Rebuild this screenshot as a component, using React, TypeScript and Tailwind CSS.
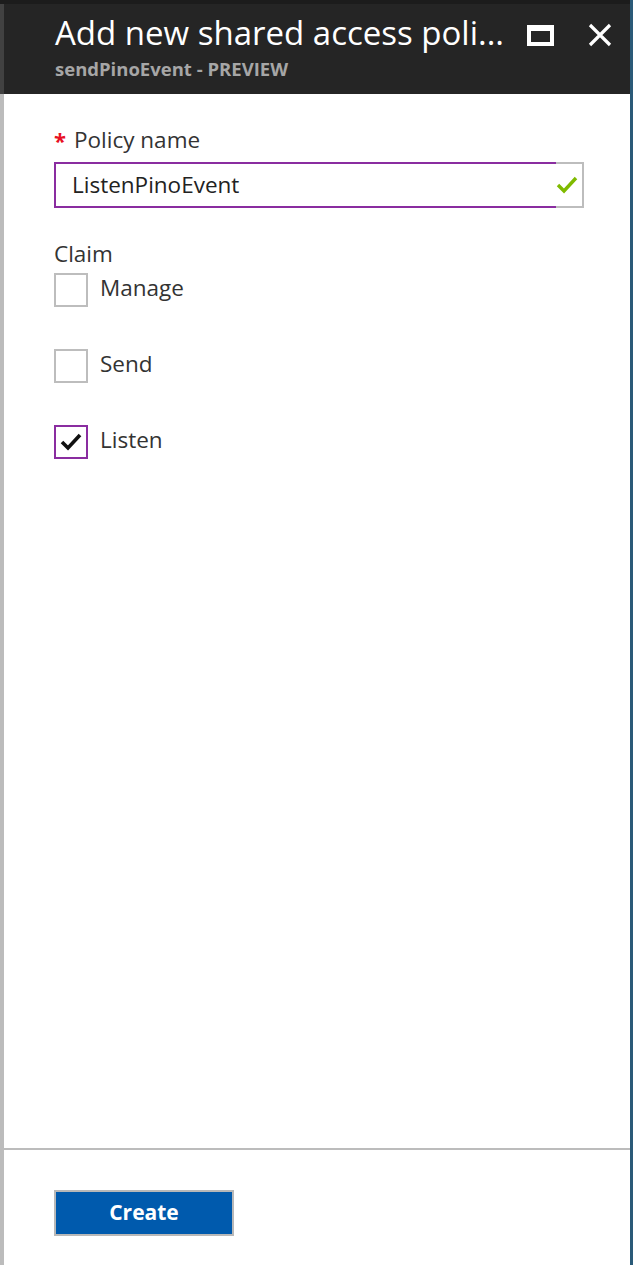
import { useState } from 'react';

const font = { fontFamily: '"Open Sans", "Noto Sans", sans-serif' };

interface ClaimProps {
    label: string;
    checked: boolean;
    onToggle: () => void;
}

function ClaimRow({ label, checked, onToggle }: ClaimProps) {
    return (
        <button type="button" onClick={onToggle} className="flex items-start gap-[12px] h-[76px] text-left">
            <span
                className={`flex items-center justify-center w-[34px] h-[34px] border-2 bg-white ${
                    checked ? 'border-[#8a2da0]' : 'border-[#bdbdbd]'
                }`}
            >
                {checked && (
                    <svg width="24" height="22" viewBox="0 0 24 22">
                        <path d="M3 11 L9 17 L21 4" fill="none" stroke="#111" strokeWidth="3.6" />
                    </svg>
                )}
            </span>
            <span className="text-[22.5px] leading-[30px] text-[#333]">{label}</span>
        </button>
    );
}

export default function App() {
    const [name, setName] = useState('ListenPinoEvent');
    const [claims, setClaims] = useState({ Manage: false, Send: false, Listen: true });

    const toggle = (key: keyof typeof claims) => setClaims((c) => ({ ...c, [key]: !c[key] }));

    return (
        <div className="flex w-[633px] h-[1265px] bg-white overflow-hidden" style={font}>
            <div className="flex-1 flex flex-col">
                <div className="h-[4px] bg-[#1c1c1c]" />

                {/* blade header */}
                <div className="h-[90px] bg-[#252525] border-l-4 border-[#414141] flex items-start pl-[51px] pr-[18px] pt-[7px]">
                    <div className="flex-1 min-w-0">
                        <h1 className="text-[33px] leading-[44px] text-white whitespace-nowrap">Add new shared access poli...</h1>
                        <div className="text-[18.5px] leading-[24px] font-bold text-[#a6a6a6] mt-[2px]">sendPinoEvent - PREVIEW</div>
                    </div>
                    <div className="flex items-center gap-[34px] pt-[12px]">
                        <span className="block w-[27px] h-[21px] border-white border-x-4 border-t-[6px] border-b-4" />
                        <svg width="24" height="24" viewBox="0 0 24 24">
                            <path d="M2 2 L22 22 M22 2 L2 22" stroke="#fff" strokeWidth="3.2" />
                        </svg>
                    </div>
                </div>

                {/* form */}
                <div className="flex-1 border-l-4 border-[#bcbcbc] flex flex-col">
                    <div className="flex-1 pl-[50px] pr-[46px] pt-[30px]">
                        <label className="flex items-center gap-[8px] text-[22.5px] leading-[32px] text-[#333]">
                            <span className="text-[#e81123] text-[22px] font-bold">*</span>
                            Policy name
                        </label>
                        <div className="mt-[6px] flex h-[46px]">
                            <div className="flex-1 border-2 border-r-0 border-[#8a2da0] flex items-center">
                                <input
                                    value={name}
                                    onChange={(e) => setName(e.target.value)}
                                    className="w-full outline-none pl-[16px] text-[22.5px] text-[#222] bg-transparent"
                                    style={font}
                                />
                            </div>
                            <div className="w-[28px] border-2 border-l-0 border-[#bdbdbd] flex items-center justify-start">
                                <svg width="22" height="20" viewBox="0 0 22 20">
                                    <path d="M2 10 L8 16 L20 3" fill="none" stroke="#7fba00" strokeWidth="3.4" />
                                </svg>
                            </div>
                        </div>

                        <div className="mt-[31px] text-[22.5px] leading-[30px] text-[#333]">Claim</div>
                        <div className="flex flex-col mt-[4px]">
                            <ClaimRow label="Manage" checked={claims.Manage} onToggle={() => toggle('Manage')} />
                            <ClaimRow label="Send" checked={claims.Send} onToggle={() => toggle('Send')} />
                            <ClaimRow label="Listen" checked={claims.Listen} onToggle={() => toggle('Listen')} />
                        </div>
                    </div>

                    <div className="h-[117px] border-t-2 border-[#bcbcbc] pl-[50px] pt-[40px]">
                        <button
                            type="button"
                            className="w-[180px] h-[46px] border-2 border-[#b8b8b8] bg-[#005aad] text-white text-[21px] font-bold"
                        >
                            Create
                        </button>
                    </div>
                </div>
            </div>
            <div className="w-[3px] bg-[#2a5a78]" />
        </div>
    );
}
